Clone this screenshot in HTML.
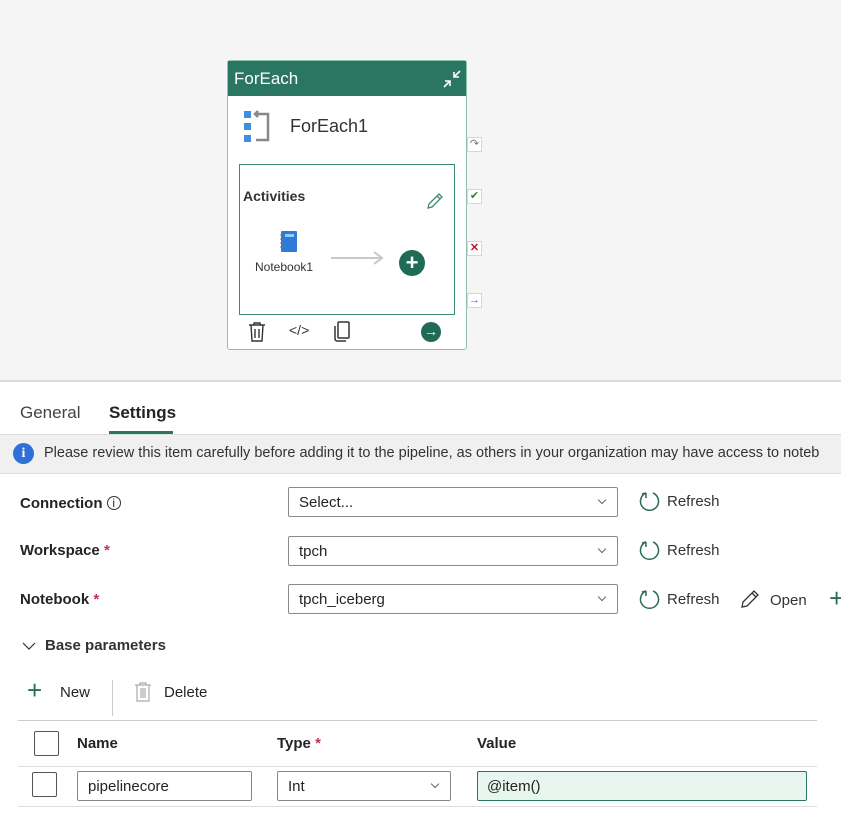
<!DOCTYPE html>
<html><head><meta charset="utf-8"><style>
*{box-sizing:border-box;margin:0;padding:0}
body{width:841px;height:813px;overflow:hidden;background:#fff;font-family:"Liberation Sans",sans-serif;color:#242424;position:relative}
.a{position:absolute}
.canvas{left:0;top:0;width:841px;height:382px;background:#f5f5f5;border-bottom:2px solid #dcdcdc}
.node{left:227px;top:60px;width:240px;height:290px;background:#fff;border:1px solid #8fc0b0;border-radius:3px}
.hdr{left:0;top:0;width:238px;height:35px;background:#2b7662;color:#fff;font-size:17px;padding:8px 0 0 6px}
.inner{left:11px;top:103px;width:216px;height:151px;border:1.5px solid #3f8a74}
.side{width:15px;height:15px;background:#fff;border:1px solid #c9d8ee;font-size:11px;text-align:center;line-height:13px}
.lbl{font-size:15px;font-weight:bold;left:20px}
.sel{left:288px;width:330px;height:30px;border:1px solid #8a8a8a;border-radius:2px;font-size:15px;padding:6px 10px}
.chev{position:absolute;right:12px;top:9px;width:6px;height:6px;border-right:1px solid #666;border-bottom:1px solid #666;transform:rotate(45deg)}
.ref{font-size:15px;color:#333}
.star{color:#c4314b}
</style></head><body>
<div class="a canvas"></div>
<div class="a node">
 <div class="a hdr">ForEach</div>
 <svg class="a" style="left:214px;top:8px" width="20" height="20" viewBox="0 0 20 20" stroke="#fff" stroke-width="1.6" fill="none"><path d="M2 18 L8 12 M3 12 H8 V17 M18 2 L12 8 M12 3 V8 H17"/></svg>
 <svg class="a" style="left:16px;top:49px" width="28" height="34"><rect x="0" y="1" width="7" height="7" fill="#3d8fe0"/><rect x="0" y="13" width="7" height="7" fill="#3d8fe0"/><rect x="0" y="25" width="7" height="7" fill="#3d8fe0"/><path d="M13 4 H24 V30 H12 M14 1 L11 4 L14 7" stroke="#888" stroke-width="2.5" fill="none"/></svg>
 <div class="a" style="left:62px;top:55px;font-size:18px;color:#333">ForEach1</div>
 <div class="a inner">
  <div class="a" style="left:3px;top:23px;font-size:14px;font-weight:bold;color:#333">Activities</div>
  <svg class="a" style="left:186px;top:27px" width="18" height="18" viewBox="0 0 18 18" fill="none" stroke="#3f8a74" stroke-width="1.3"><path d="M2 16 L3 12 L13 2 L16 5 L6 15 Z M11 4 L14 7"/></svg>
  <svg class="a" style="left:38px;top:65px" width="22" height="24"><rect x="3" y="1" width="16" height="21" rx="1" fill="#2f7ad6"/><rect x="7" y="4" width="9" height="3" fill="#8fd0ff"/><path d="M2 5h3M2 9h3M2 13h3M2 17h3" stroke="#777"/></svg>
  <div class="a" style="left:15px;top:95px;font-size:12px;color:#333">Notebook1</div>
  <svg class="a" style="left:90px;top:86px" width="56" height="14"><path d="M1 7 H52 M44 1 L52 7 L44 13" stroke="#c8c8c8" stroke-width="2" fill="none"/></svg>
  <div class="a" style="left:159px;top:85px;width:26px;height:26px;border-radius:50%;background:#1f6b56;color:#fff;font-size:22px;font-weight:bold;text-align:center;line-height:25px">+</div>
 </div>
 <svg class="a" style="left:19px;top:260px" width="20" height="22" fill="none" stroke="#333" stroke-width="1.4"><path d="M2 4h16M7 4V2h6v2M4 4l1 16h10l1-16M8 8v9M12 8v9"/></svg>
 <div class="a" style="left:61px;top:261px;font-size:14px;color:#333">&lt;/&gt;</div>
 <svg class="a" style="left:104px;top:260px" width="20" height="22" fill="none" stroke="#333" stroke-width="1.5"><rect x="6" y="1" width="11" height="16" rx="1"/><path d="M3 5v13c0 1 1 2 2 2h9"/></svg>
 <div class="a" style="left:193px;top:261px;width:20px;height:20px;border-radius:50%;background:#1f6b56;color:#fff;font-size:14px;text-align:center;line-height:19px;font-weight:bold">→</div>
</div>
<div class="a side" style="left:467px;top:137px;color:#777">↷</div>
<div class="a side" style="left:467px;top:189px;color:#2a8a2a">✔</div>
<div class="a side" style="left:467px;top:241px;color:#c4142b;font-weight:bold">✕</div>
<div class="a side" style="left:467px;top:293px;color:#2e6fd0">→</div>

<div class="a" style="left:20px;top:403px;font-size:17px;color:#444">General</div>
<div class="a" style="left:109px;top:403px;font-size:17px;font-weight:bold">Settings</div>
<div class="a" style="left:109px;top:431px;width:64px;height:3px;background:#2b7662"></div>
<div class="a" style="left:0;top:434px;width:841px;height:40px;background:#f0f0f0;border-top:1px solid #ddd;border-bottom:1px solid #ddd"></div>
<div class="a" style="left:13px;top:443px;width:21px;height:21px;border-radius:50%;background:#2f6fd8;color:#fff;font-size:14px;font-weight:bold;text-align:center;line-height:21px;font-family:'Liberation Serif',serif">i</div>
<div class="a" style="left:44px;top:445px;font-size:14.5px;white-space:nowrap;color:#333">Please review this item carefully before adding it to the pipeline, as others in your organization may have access to noteb</div>

<div class="a lbl" style="top:495px">Connection <span style="font-weight:normal;font-size:12px;border:1px solid #333;border-radius:50%;display:inline-block;width:14px;height:14px;text-align:center;line-height:12px;vertical-align:top;margin-top:1px">i</span></div>
<div class="a sel" style="top:487px">Select...<span class="chev"></span></div>
<div class="a lbl" style="top:542px">Workspace <span class="star">*</span></div>
<div class="a sel" style="top:536px">tpch<span class="chev"></span></div>
<div class="a lbl" style="top:591px">Notebook <span class="star">*</span></div>
<div class="a sel" style="top:584px">tpch_iceberg<span class="chev"></span></div>

<svg width="0" height="0" style="position:absolute"><defs><symbol id="r" viewBox="0 0 22 22"><path d="M7 3 A9 9 0 1 0 14 3 M7 3 L7 8 M7 3 L3 4" fill="none" stroke="#2b6b5a" stroke-width="1.5"/></symbol></defs></svg>
<svg class="a" style="left:639px;top:490px" width="22" height="22"><use href="#r"/></svg><div class="a ref" style="left:667px;top:493px">Refresh</div>
<svg class="a" style="left:639px;top:539px" width="22" height="22"><use href="#r"/></svg><div class="a ref" style="left:667px;top:542px">Refresh</div>
<svg class="a" style="left:639px;top:588px" width="22" height="22"><use href="#r"/></svg><div class="a ref" style="left:667px;top:591px">Refresh</div>
<svg class="a" style="left:740px;top:589px" width="20" height="20" fill="none" stroke="#333" stroke-width="1.3"><path d="M2 18 L3 13 L14 2 L18 6 L7 17 Z M12 4 L16 8"/></svg>
<div class="a ref" style="left:770px;top:592px">Open</div>
<div class="a" style="left:829px;top:583px;font-size:26px;color:#2b6b5a;font-weight:200">+</div>

<svg class="a" style="left:22px;top:640px" width="14" height="12"><path d="M1 3 L7 9 L13 3" stroke="#333" stroke-width="1.2" fill="none"/></svg>
<div class="a" style="left:45px;top:637px;font-size:15px;font-weight:bold;color:#333">Base parameters</div>
<div class="a" style="left:27px;top:675px;font-size:26px;color:#2b6b5a;font-weight:200">+</div>
<div class="a" style="left:60px;top:684px;font-size:15px">New</div>
<div class="a" style="left:112px;top:680px;width:1px;height:36px;background:#ccc"></div>
<svg class="a" style="left:134px;top:682px" width="18" height="20" fill="none" stroke="#aaa" stroke-width="1.2"><path d="M1 3h16M6 3V1h6v2M3 3v16h12V3M7 6v10M9 6v10M11 6v10"/></svg>
<div class="a" style="left:164px;top:684px;font-size:15px">Delete</div>

<div class="a" style="left:18px;top:720px;width:799px;height:1px;background:#ccc"></div>
<div class="a" style="left:34px;top:731px;width:25px;height:25px;border:1px solid #555;border-radius:2px"></div>
<div class="a" style="left:77px;top:735px;font-size:15px;font-weight:bold">Name</div>
<div class="a" style="left:277px;top:735px;font-size:15px;font-weight:bold">Type <span class="star">*</span></div>
<div class="a" style="left:477px;top:735px;font-size:15px;font-weight:bold">Value</div>
<div class="a" style="left:18px;top:766px;width:799px;height:1px;background:#ddd"></div>
<div class="a" style="left:32px;top:772px;width:25px;height:25px;border:1px solid #555;border-radius:2px"></div>
<div class="a" style="left:77px;top:771px;width:175px;height:30px;border:1px solid #888;border-radius:2px;padding:6px 10px;font-size:15px">pipelinecore</div>
<div class="a" style="left:277px;top:771px;width:174px;height:30px;border:1px solid #888;border-radius:2px;padding:6px 10px;font-size:15px">Int<span class="chev"></span></div>
<div class="a" style="left:477px;top:771px;width:330px;height:30px;border:1px solid #2b7662;border-radius:2px;padding:6px 9px;font-size:15px;background:#e7f6ee">@item()</div>
<div class="a" style="left:18px;top:806px;width:799px;height:1px;background:#ddd"></div>
</body></html>
